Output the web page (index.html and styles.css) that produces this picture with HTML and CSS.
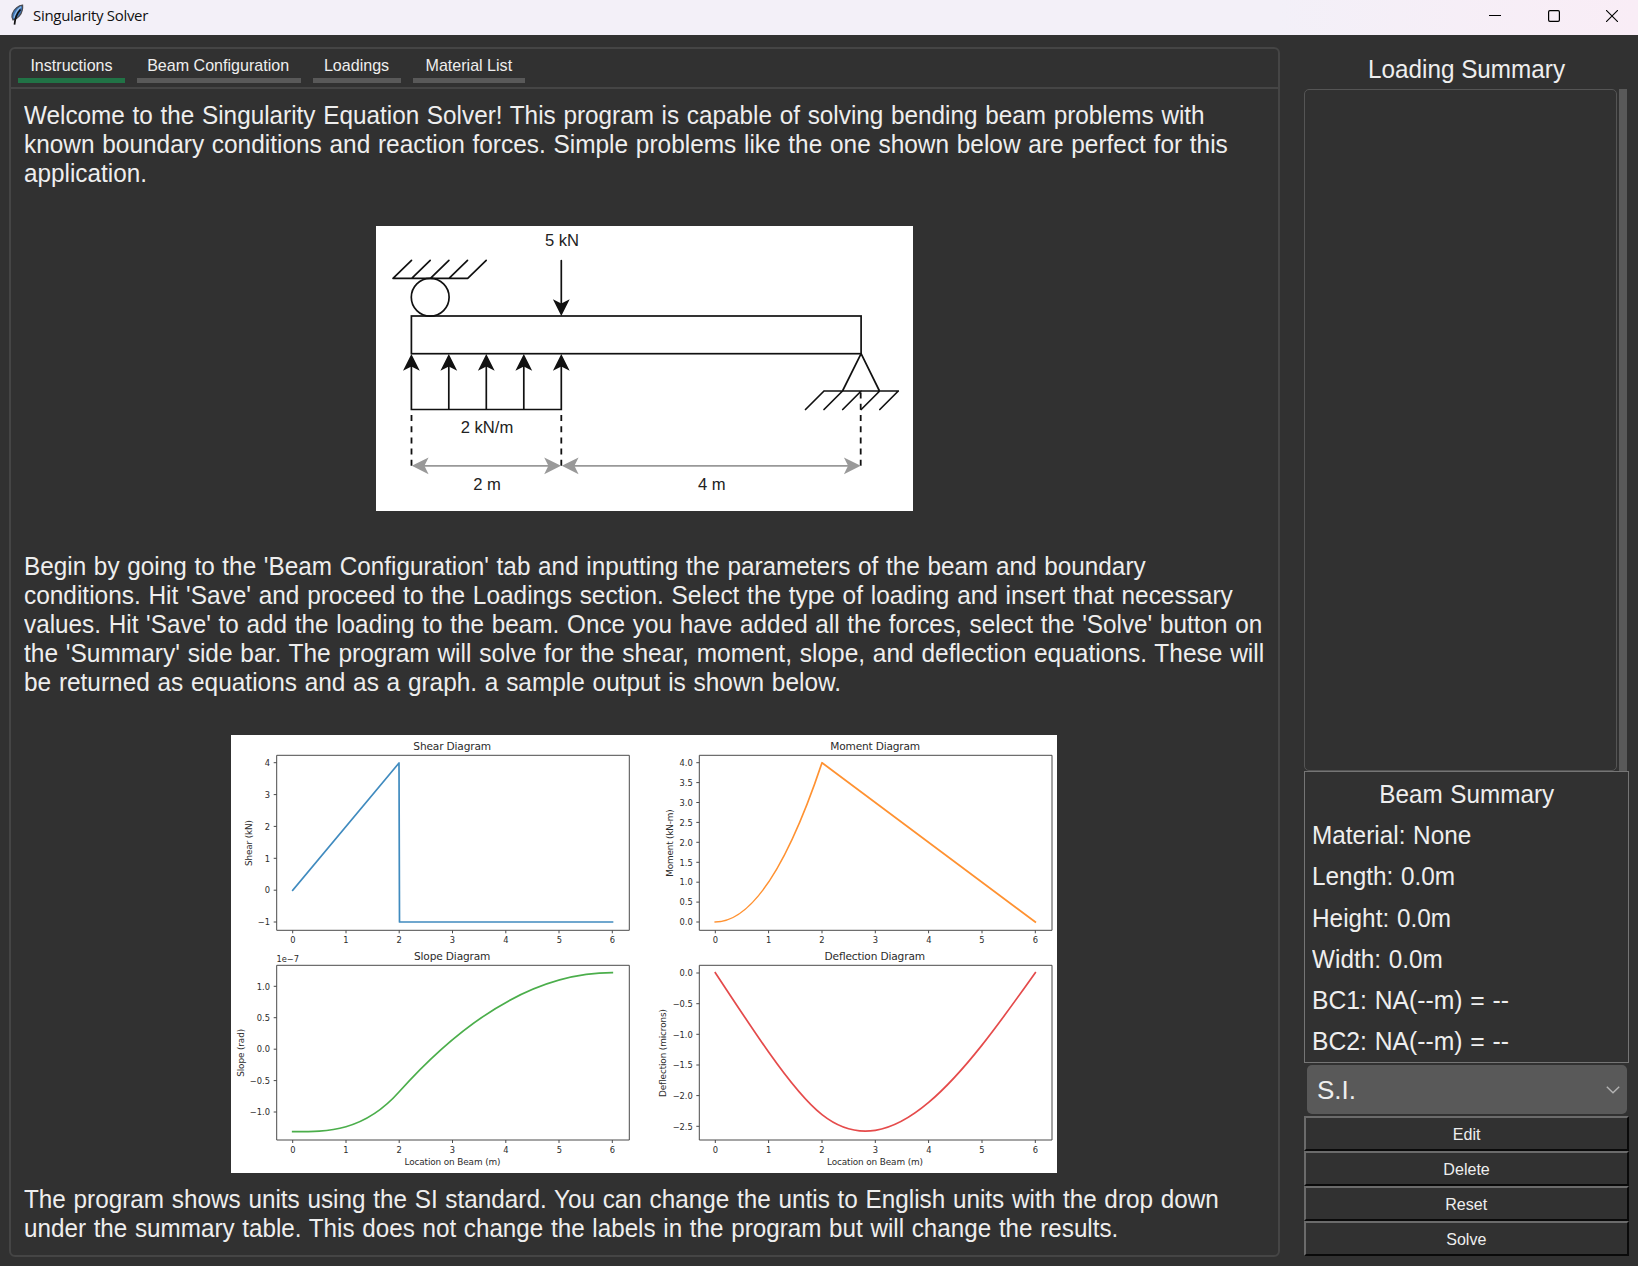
FILE: index.html
```html
<!DOCTYPE html>
<html lang="en">
<head>
<meta charset="utf-8">
<title>Singularity Solver</title>
<link rel="stylesheet" href="styles.css">
</head>
<body>
<header class="titlebar">
  <svg class="feather" width="16" height="22" viewBox="0 0 16 24" preserveAspectRatio="none">
    <path d="M13.600 1.200C10 1.600 5 5 3.200 11c-.7 2.800-.2 5 .8 6.500C9 16 12.500 11 13.200 7c.4-2 .6-4 .4-5.800z" fill="#3d74b4" stroke="#4a4c52" stroke-width="1.200"/>
    <path d="M12 3C8 6.500 6 11 5 15" stroke="#8fbbe6" stroke-width="1.300" fill="none"/>
    <path d="M11.500 6C8 10 6 14 5.500 22.500" stroke="#111" stroke-width="1.700" fill="none"/>
  </svg>
  <span class="app-name">Singularity Solver</span>
  <div class="controls">
    <svg width="12" height="12" viewBox="0 0 12 12"><path d="M0 5.500h12" stroke="#000" fill="none"/></svg>
    <svg width="12" height="12" viewBox="0 0 12 12"><rect x=".6" y=".6" width="10.800" height="10.800" rx="1.300" stroke="#000" stroke-width="1.200" fill="none"/></svg>
    <svg width="12" height="12" viewBox="0 0 12 12"><path d="M0 0l12 12M12 0L0 12" stroke="#000" stroke-width="1.100" fill="none"/></svg>
  </div>
</header>
<div class="workspace">
  <main class="notebook">
    <nav class="tabs">
      <a class="tab active t1"><span>Instructions</span></a>
      <a class="tab t2"><span>Beam Configuration</span></a>
      <a class="tab t3"><span>Loadings</span></a>
      <a class="tab t4"><span>Material List</span></a>
    </nav>
    <section class="page">
      <p class="copy intro">
        <span class="line">Welcome to the Singularity Equation Solver! This program is capable of solving bending beam problems with</span>
        <span class="line">known boundary conditions and reaction forces. Simple problems like the one shown below are perfect for this</span>
        <span class="line">application.</span>
      </p>
      <svg class="beam" width="537" height="285" viewBox="376 226 537 285">
        <defs>
          <path id="head" d="M0 0L8.400 16.800L0 12.600L-8.400 16.800Z"/>
        </defs>
        <g fill="none" stroke="#111" stroke-width="1.700" stroke-linecap="round">
          <path d="M393 278.300H467.700M393 278.300l18.500-18M411.700 278.300l18.500-18M430.400 278.300l18.500-18M449 278.300l18.500-18M467.700 278.300l18.500-18"/>
          <circle cx="430.200" cy="297.200" r="18.900"/>
          <rect x="411.400" y="316" width="449.700" height="37.700"/>
          <path d="M561.300 260.500V305M411.400 365V409.500H561.300V365M448.800 365V409.500M486.300 365V409.500M523.800 365V409.500"/>
          <path d="M861.100 353.700L842.500 391M861.100 353.700L879.500 391M824 391H898.300M824 391l-18.500 18.500M842.500 391l-18.500 18.500M861.200 391l-18.500 18.500M879.700 391l-18.500 18.500M898.300 391l-18.500 18.500"/>
        </g>
        <g stroke="#111" stroke-width="1.800" stroke-dasharray="6 5.200" fill="none">
          <path d="M411.500 415V466M561.300 415V466M860.700 392.600V466"/>
        </g>
        <path d="M420 465.800H553M570 465.800H852" stroke="#999" stroke-width="1.700"/>
        <g fill="#111">
          <use href="#head" transform="translate(561.300 316) rotate(180)"/>
          <use href="#head" x="411.400" y="354"/>
          <use href="#head" x="448.800" y="354"/>
          <use href="#head" x="486.300" y="354"/>
          <use href="#head" x="523.800" y="354"/>
          <use href="#head" x="561.300" y="354"/>
        </g>
        <g fill="#999">
          <use href="#head" transform="translate(411.800 465.800) rotate(-90)"/>
          <use href="#head" transform="translate(561 465.800) rotate(90)"/>
          <use href="#head" transform="translate(561.800 465.800) rotate(-90)"/>
          <use href="#head" transform="translate(860.700 465.800) rotate(90)"/>
        </g>
        <g class="beam-text">
          <text x="562" y="246">5 kN</text>
          <text x="487" y="433">2 kN/m</text>
          <text x="487" y="490">2 m</text>
          <text x="711.800" y="490">4 m</text>
        </g>
      </svg>
      <p class="copy steps">
        <span class="line">Begin by going to the 'Beam Configuration' tab and inputting the parameters of the beam and boundary</span>
        <span class="line">conditions. Hit 'Save' and proceed to the Loadings section. Select the type of loading and insert that necessary</span>
        <span class="line">values. Hit 'Save' to add the loading to the beam. Once you have added all the forces, select the 'Solve' button on</span>
        <span class="line">the 'Summary' side bar. The program will solve for the shear, moment, slope, and deflection equations. These will</span>
        <span class="line">be returned as equations and as a graph. a sample output is shown below.</span>
      </p>
      <svg class="plots" width="826" height="438" viewBox="231 735 826 438">
        <g class="axes">
          <path d="M276.700 755.300H629.300V930.300H276.700ZM699.300 755.300H1052V930.300H699.300ZM276.700 965.300H629.300V1140H276.700ZM699.300 965.300H1052V1140H699.300Z"/>
          <path id="xt" d="M292.700 930.300v3M346 930.300v3M399.200 930.300v3M452.500 930.300v3M505.800 930.300v3M559 930.300v3M612.300 930.300v3M715.300 930.300v3M768.600 930.300v3M822 930.300v3M875.300 930.300v3M928.600 930.300v3M982 930.300v3M1035.300 930.300v3"/>
          <use href="#xt" y="209.700"/>
          <path d="M276.700 762.700h-3M276.700 794.600h-3M276.700 826.400h-3M276.700 858.300h-3M276.700 890.200h-3M276.700 922h-3"/>
          <path d="M699.300 762.700h-3M699.300 782.600h-3M699.300 802.500h-3M699.300 822.400h-3M699.300 842.300h-3M699.300 862.300h-3M699.300 882.200h-3M699.300 902.100h-3M699.300 922h-3"/>
          <path d="M276.700 986.300h-3M276.700 1017.700h-3M276.700 1049.200h-3M276.700 1080.600h-3M276.700 1112h-3"/>
          <path d="M699.300 973h-3M699.300 1003.700h-3M699.300 1034.300h-3M699.300 1065h-3M699.300 1095.600h-3M699.300 1126.300h-3"/>
        </g>
        <g class="curve">
          <path stroke="#1f77b4" d="M292.700 890.200L399 763L399.500 922H612.500"/>
          <path stroke="#ff7f0e" d="M715.300 922Q768.600 922 822 762.700L1035.300 922"/>
          <path stroke="#2ca02c" d="M292.700 1131.700C328.200 1131.700 363.700 1131.700 399.200 1091.800Q505.800 972.700 612.300 972.700"/>
          <path stroke="#e02b2c" d="M715.300 972.700C733.100 999.800 750.900 1026.900 768.600 1052.100C786.400 1077.300 804.200 1100.800 822 1114.700C893.100 1171 964.200 1073 1035.300 972.700"/>
        </g>
        <g class="tick mid">
          <g id="xl">
            <text x="292.900" y="943">0</text><text x="346" y="943">1</text><text x="399.200" y="943">2</text><text x="452.500" y="943">3</text><text x="506" y="943">4</text><text x="559.300" y="943">5</text><text x="612.300" y="943">6</text>
            <text x="715.300" y="943">0</text><text x="768.600" y="943">1</text><text x="821.800" y="943">2</text><text x="875.300" y="943">3</text><text x="929" y="943">4</text><text x="982" y="943">5</text><text x="1035.300" y="943">6</text>
          </g>
          <use href="#xl" y="209.700"/>
        </g>
        <g class="tick end">
          <text x="270" y="766">4</text><text x="270" y="797.800">3</text><text x="270" y="829.700">2</text><text x="270" y="861.500">1</text><text x="270" y="893.400">0</text><text x="270" y="925.200">−1</text>
          <text x="692.800" y="766">4.0</text><text x="692.800" y="785.900">3.5</text><text x="692.800" y="805.800">3.0</text><text x="692.800" y="825.700">2.5</text><text x="692.800" y="845.600">2.0</text><text x="692.800" y="865.500">1.5</text><text x="692.800" y="885.400">1.0</text><text x="692.800" y="905.300">0.5</text><text x="692.800" y="925.200">0.0</text>
          <text x="270" y="989.500">1.0</text><text x="270" y="1020.900">0.5</text><text x="270" y="1052.400">0.0</text><text x="270" y="1083.800">−0.5</text><text x="270" y="1115.200">−1.0</text>
          <text x="692.800" y="976.400">0.0</text><text x="692.800" y="1007">−0.5</text><text x="692.800" y="1037.600">−1.0</text><text x="692.800" y="1068.200">−1.5</text><text x="692.800" y="1098.900">−2.0</text><text x="692.800" y="1129.500">−2.5</text>
        </g>
        <g class="tick">
          <text x="276.500" y="962" textLength="22.500">1e−7</text>
        </g>
        <g class="label mid">
          <text x="452.500" y="1165.200" textLength="96">Location on Beam (m)</text>
          <text x="875" y="1165.200" textLength="96">Location on Beam (m)</text>
          <text transform="translate(252 843) rotate(-90)" textLength="46">Shear (kN)</text>
          <text transform="translate(673.200 843) rotate(-90)" textLength="67.500">Moment (kN-m)</text>
          <text transform="translate(243.500 1052.800) rotate(-90)" textLength="48">Slope (rad)</text>
          <text transform="translate(666 1053) rotate(-90)" textLength="88">Deflection (microns)</text>
        </g>
        <g class="title mid">
          <text x="452.200" y="750" textLength="77.700">Shear Diagram</text>
          <text x="875.200" y="750" textLength="90">Moment Diagram</text>
          <text x="452.200" y="959.800" textLength="76.500">Slope Diagram</text>
          <text x="874.800" y="959.800" textLength="100.500">Deflection Diagram</text>
        </g>
      </svg>
      <p class="copy units">
        <span class="line">The program shows units using the SI standard. You can change the untis to English units with the drop down</span>
        <span class="line">under the summary table. This does not change the labels in the program but will change the results.</span>
      </p>
    </section>
  </main>
  <aside class="sidebar">
    <h2 class="heading"><span>Loading Summary</span></h2>
    <div class="loads"><div class="list"></div><div class="scrollbar"></div></div>
    <section class="summary">
      <h2><span>Beam Summary</span></h2>
      <p>Material: None</p>
      <p>Length: 0.0m</p>
      <p>Height: 0.0m</p>
      <p>Width: 0.0m</p>
      <p class="bc">BC1: NA(--m) = --</p>
      <p class="bc">BC2: NA(--m) = --</p>
    </section>
    <div class="combo"><span>S.I.</span>
      <svg width="14" height="8" viewBox="0 0 14 8"><path d="M.8.8L7 6.800L13.200.8" fill="none" stroke="#b4b4b4" stroke-width="1.400"/></svg>
    </div>
    <button class="action"><span>Edit</span></button>
    <button class="action"><span>Delete</span></button>
    <button class="action"><span>Reset</span></button>
    <button class="action"><span>Solve</span></button>
  </aside>
</div>
</body>
</html>
```
FILE: styles.css
```css
* { box-sizing: border-box; }
body {
  margin: 0;
  width: 1638px;
  height: 1266px;
  overflow: hidden;
  display: flex;
  flex-direction: column;
  background: #313131;
  color: #eee;
  font-family: "Liberation Sans", Arial, sans-serif;
}
h2, p { margin: 0; font-weight: 400; }

.titlebar {
  height: 35px;
  flex: none;
  display: flex;
  align-items: center;
  padding: 0 20px 3px 9px;
  background: linear-gradient(90deg, #f3f0f8 0, #f3f0f8 78%, #f9edf6 100%);
  color: #111;
}
.feather { margin: -2px 8px 0 0; }
.app-name { font: 15px/20px "Open Sans", "Noto Sans", sans-serif; letter-spacing: -0.3px; margin-top: -2px; }
.controls { margin-left: auto; display: flex; gap: 46.500px; }

.workspace { flex: 1; display: flex; padding: 12px 9px 9px 9px; gap: 24px; }

.notebook {
  width: 1271px;
  height: 1210px;
  flex: none;
  border: 2px solid #454545;
  border-radius: 6px;
  display: flex;
  flex-direction: column;
}
.tabs {
  height: 40px;
  flex: none;
  display: flex;
  gap: 12px;
  padding: 7px 0 0 7px;
  border-bottom: 2px solid #454545;
}
.tab {
  height: 27px;
  border-bottom: 5px solid #595959;
  padding-right: 1px;
  font-size: 17px;
  line-height: 20px;
  display: flex;
  justify-content: center;
  white-space: nowrap;
}
.tab.active { border-color: #217346; }
.t1 { width: 107px; }
.t2 { width: 164px; }
.t3 { width: 88px; }
.t4 { width: 112px; }
/* condensed interface text */
.tab span, .action span { display: inline-block; transform: scaleX(0.945); }

.page { flex: 1; display: flex; flex-direction: column; padding: 12px 12px 0 13px; }
.copy { width: 1240px; font-size: 26px; line-height: 28.800px; word-spacing: 1px; white-space: nowrap; }
.line { display: block; width: max-content; transform: scaleX(0.935); transform-origin: 0 0; }
.intro .line:nth-child(2), .steps .line:nth-child(2), .steps .line:nth-child(5) { transform: scaleX(0.939); }
.steps .line:nth-child(4) { transform: scaleX(0.942); }
.units .line:nth-child(2) { transform: scaleX(0.932); }
.beam { background: #fff; margin: 39px 0 41px 352px; flex: none; }
.plots { background: #fff; margin: 39px 0 12px 207px; flex: none; }

.beam-text { font-size: 16.600px; fill: #222; text-anchor: middle; }
.axes { fill: none; stroke: #4a4a4a; stroke-width: 1; }
.curve { fill: none; stroke-width: 1.700; stroke-linejoin: round; opacity: 0.850; stroke-linecap: square; }
.tick, .label, .title { font-family: "DejaVu Sans", sans-serif; fill: #2b2b2b; }
.tick { font-size: 8.300px; }
.label { font-size: 8.900px; }
.title { font-size: 10.600px; }
.mid { text-anchor: middle; }
.end { text-anchor: end; }

.sidebar { width: 325px; display: flex; flex-direction: column; }
.heading, .summary h2 { font-size: 26px; text-align: center; }
.heading span, .summary h2 span { display: inline-block; transform: scaleX(0.934); }
.heading { height: 42px; line-height: 44px; }
.loads { height: 682px; display: flex; gap: 2px; }
.list { width: 313px; border: 1.500px solid #555; border-radius: 5px; }
.scrollbar { width: 8px; background: #595959; }
.summary {
  height: 292px;
  border: 1.500px solid #757575;
  padding: 2px 7px 0 7px;
  font-size: 26px;
  line-height: 41.200px;
  word-spacing: 1px;
  white-space: nowrap;
}
.summary p { transform: scaleX(0.937); transform-origin: 0 0; }
.summary .bc { transform: scaleX(0.950); }
.combo {
  height: 49px;
  margin: 2px 2px 2px 3px;
  padding: 1px 7px 0 10px;
  background: #595959;
  border-radius: 5px;
  display: flex;
  align-items: center;
  justify-content: space-between;
  font-size: 26px;
}
.action {
  height: 35px;
  padding: 2px 0 0;
  border: 2px solid;
  border-color: #6b6b6b #0a0a0a #0a0a0a #6b6b6b;
  background: #313131;
  color: #eee;
  font: 17px/20px "Liberation Sans", Arial, sans-serif;
}
```
